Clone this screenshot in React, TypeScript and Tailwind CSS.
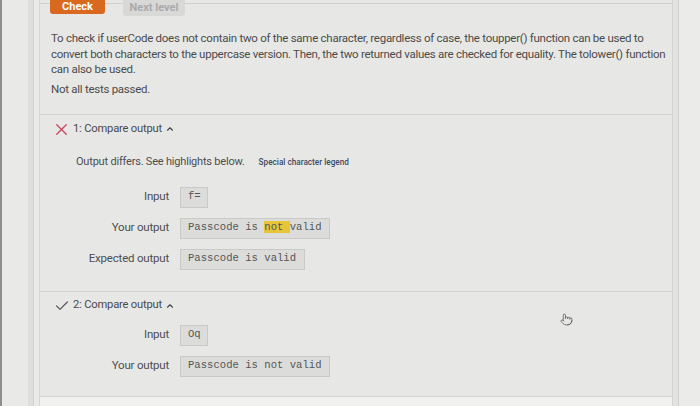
import { Check, X, ChevronUp, Pointer } from 'lucide-react';

interface Row {
  label: string;
  value: React.ReactNode;
  width: string;
}

function ResultRows({ rows }: { rows: Row[] }) {
  return (
    <div className="flex flex-col gap-[10px]">
      {rows.map((row) => (
        <div key={row.label} className="flex items-center">
          <div className="w-[140px] text-right pr-[11px] text-[11.5px] tracking-[-0.2px] text-[#4e4e4e]">{row.label}</div>
          <div
            className={`h-[21px] ${row.width} flex items-center px-[7px] bg-[#dcdddb] border border-[#c9cac8] font-['Liberation_Mono',monospace] text-[10.6px] text-[#555]`}
          >
            {row.value}
          </div>
        </div>
      ))}
    </div>
  );
}

function SectionHeader({ passed, title }: { passed: boolean; title: string }) {
  return (
    <div className="flex items-center h-[14px] pl-[12px] text-[11.2px] tracking-[-0.2px] text-[#4a4a4a]">
      {passed ? (
        <Check className="w-[16px] h-[16px] ml-[2px] mr-[3px] text-[#5a5a5a]" strokeWidth={1.9} />
      ) : (
        <X className="w-[19px] h-[19px] mr-[2px] text-[#c8475c]" strokeWidth={1.7} />
      )}
      <span>{title}</span>
      <ChevronUp className="w-[10px] h-[10px] ml-[3px] text-[#444]" strokeWidth={2.6} />
    </div>
  );
}

export default function App() {
  return (
    <div className="w-[700px] h-[406px] bg-[#e7e8e6] flex overflow-hidden font-['Roboto',sans-serif] text-[#4a4a4a] relative">
      {/* left gutter */}
      <div className="w-[40px] h-full flex border-l-[2px] border-[#8e8e8e]">
        <div className="w-[26px] bg-[#e9e9e8]" />
        <div className="w-[6px] bg-[#dedfdd] border-r border-[#d2d3d1]" />
        <div className="flex-1 bg-[#eaeae9] border-r border-[#d5d6d4]" />
      </div>

      {/* main panel */}
      <div className="w-[632px] h-full flex flex-col">
        <div className="mt-[3px] border-t border-[#cfd0ce]">
          <div className="-mt-[14px] flex gap-[18px] pl-[10px]">
            <div className="w-[55px] h-[24px] bg-[#d9691f] rounded-[3px] flex items-end justify-center pb-[1px] text-white text-[11px] leading-[12px] font-bold">
              Check
            </div>
            <div className="w-[62px] h-[26px] bg-[#d8d8d7] rounded-[3px] flex items-end justify-center pb-[2px] text-[#aaa] text-[11px] leading-[12px] font-bold">
              Next level
            </div>
          </div>
        </div>

        <div className="pl-[11px] pt-[15px] text-[11.5px] leading-[15.5px] tracking-[-0.27px] text-[#4b4b4b]">
          <p>
            To check if userCode does not contain two of the same character, regardless of case, the toupper() function can be used to
            <br />
            convert both characters to the uppercase version. Then, the two returned values are checked for equality. The tolower() function
            <br />
            can also be used.
          </p>
          <p className="mt-[4px]">Not all tests passed.</p>
        </div>

        {/* test 1 */}
        <div className="mt-[17px] border-t border-[#d3d4d2] pt-[7px] pb-[21px]">
          <SectionHeader passed={false} title="1: Compare output" />
          <div className="flex items-baseline mt-[18px] pl-[36px]">
            <span className="text-[11px] tracking-[-0.2px] text-[#4e4e4e]">Output differs. See highlights below.</span>
            <span className="ml-[14px] text-[8.2px] font-medium text-[#3d4a66]">Special character legend</span>
          </div>
          <div className="mt-[16px]">
            <ResultRows
              rows={[
                { label: 'Input', value: 'f=', width: 'w-[28px]' },
                {
                  label: 'Your output',
                  value: (
                    <span>
                      Passcode is <span className="bg-[#e7c53a]">not </span>valid
                    </span>
                  ),
                  width: 'w-[150px]',
                },
                { label: 'Expected output', value: 'Passcode is valid', width: 'w-[125px]' },
              ]}
            />
          </div>
        </div>

        {/* test 2 */}
        <div className="border-t border-[#d3d4d2] pt-[7px] pb-[19px] border-b">
          <SectionHeader passed={true} title="2: Compare output" />
          <div className="mt-[12px]">
            <ResultRows
              rows={[
                { label: 'Input', value: 'Oq', width: 'w-[28px]' },
                { label: 'Your output', value: 'Passcode is not valid', width: 'w-[150px]' },
              ]}
            />
          </div>
        </div>
        <div className="flex-1 bg-[#f1f1f0]" />
      </div>

      {/* right gutter */}
      <div className="flex-1 h-full flex border-l border-[#d3d4d2]">
        <div className="w-[6px] bg-[#e2e3e1] border-r border-[#d0d1cf]" />
        <div className="flex-1 bg-[#ebebea]" />
      </div>

      {/* mouse cursor */}
      <Pointer className="absolute left-[560px] top-[313px] w-[13px] h-[13px] text-[#666]" strokeWidth={1.6} />
    </div>
  );
}
